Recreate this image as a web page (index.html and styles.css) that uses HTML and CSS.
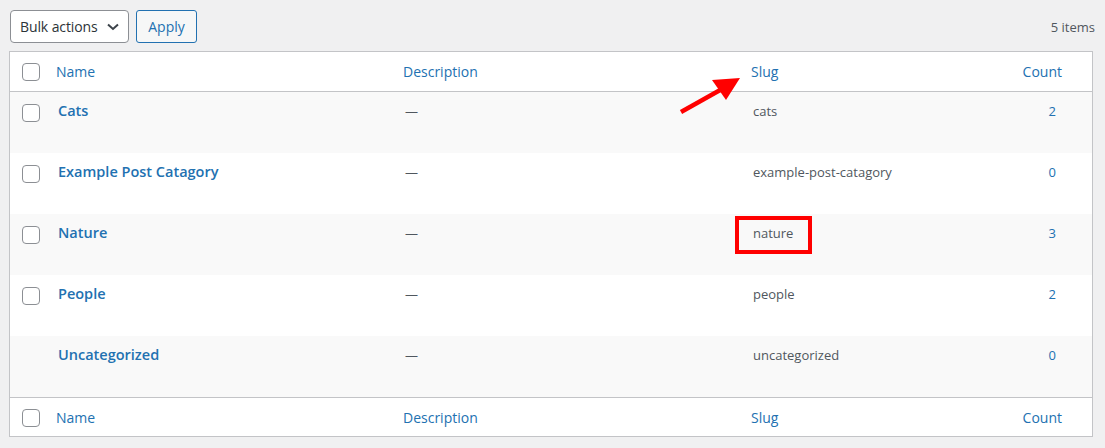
FILE: index.html
```html
<!DOCTYPE html>
<html lang="en">
<head>
<meta charset="utf-8">
<title>Categories</title>
<link rel="stylesheet" href="styles.css">
</head>
<body>
<div class="page">
  <div class="topbar">
    <div class="actions">
      <div class="select"><span class="sel-text">Bulk actions</span>
        <svg class="chev" width="12" height="8" viewBox="0 0 12 8"><path d="M1 1.5 L6 6 L11 1.5" fill="none" stroke="#3c434a" stroke-width="2"/></svg>
      </div>
      <button class="apply">Apply</button>
    </div>
    <div class="num">5 items</div>
  </div>

  <div class="list">
    <div class="grid head">
      <div class="c-check"><span class="cb"></span></div>
      <div class="c-name">Name</div>
      <div class="c-desc">Description</div>
      <div class="c-slug">Slug</div>
      <div class="c-count">Count</div>
    </div>

    <div class="grid row alt">
      <div class="c-check"><span class="cb"></span></div>
      <div class="c-name"><a class="title">Cats</a></div>
      <div class="c-desc">—</div>
      <div class="c-slug">cats</div>
      <div class="c-count">2</div>
    </div>
    <div class="grid row">
      <div class="c-check"><span class="cb"></span></div>
      <div class="c-name"><a class="title">Example Post Catagory</a></div>
      <div class="c-desc">—</div>
      <div class="c-slug">example-post-catagory</div>
      <div class="c-count">0</div>
    </div>
    <div class="grid row alt">
      <div class="c-check"><span class="cb"></span></div>
      <div class="c-name"><a class="title">Nature</a></div>
      <div class="c-desc">—</div>
      <div class="c-slug"><span class="hl">nature</span></div>
      <div class="c-count">3</div>
    </div>
    <div class="grid row">
      <div class="c-check"><span class="cb"></span></div>
      <div class="c-name"><a class="title">People</a></div>
      <div class="c-desc">—</div>
      <div class="c-slug">people</div>
      <div class="c-count">2</div>
    </div>
    <div class="grid row alt">
      <div class="c-check"></div>
      <div class="c-name"><a class="title">Uncategorized</a></div>
      <div class="c-desc">—</div>
      <div class="c-slug">uncategorized</div>
      <div class="c-count">0</div>
    </div>

    <div class="grid head foot">
      <div class="c-check"><span class="cb"></span></div>
      <div class="c-name">Name</div>
      <div class="c-desc">Description</div>
      <div class="c-slug">Slug</div>
      <div class="c-count">Count</div>
    </div>
  </div>

  <svg class="arrow" width="1105" height="448" viewBox="0 0 1105 448">
    <line x1="681" y1="112" x2="722" y2="89" stroke="#ff0000" stroke-width="4.5"/>
    <polygon points="712,80 740,78 726,100" fill="#ff0000"/>
  </svg>
</div>
</body>
</html>
```

FILE: styles.css
```css
*, *::before, *::after { box-sizing: border-box; }

html, body {
  margin: 0;
  padding: 0;
  background: #f0f0f1;
}

body {
  font-family: "Open Sans", "Noto Sans", "Liberation Sans", sans-serif;
  color: #3c434a;
  font-size: 13px;
}

.page {
  position: relative;
  width: 1105px;
  height: 448px;
  padding: 10px 12px 0 9px;
}

.topbar {
  display: flex;
  justify-content: space-between;
  align-items: center;
  height: 33px;
  margin-left: 1px;
  margin-right: -2px;
}

.actions {
  display: flex;
  gap: 7px;
  height: 33px;
}

.select {
  display: flex;
  align-items: center;
  width: 119px;
  height: 33px;
  padding: 0 9px 0 9px;
  background: #fff;
  border: 1px solid #8c8f94;
  border-radius: 4px;
  font-size: 14px;
  color: #2c3338;
  white-space: nowrap;
}

.sel-text { letter-spacing: -0.1px; }

.chev { margin-left: auto; }

.apply {
  width: 61px;
  height: 33px;
  font-family: inherit;
  font-size: 14px;
  color: #2271b1;
  background: #f6f7f7;
  border: 1px solid #2271b1;
  border-radius: 3px;
  padding: 0;
}

.num {
  font-size: 13px;
  color: #50575e;
}

.list {
  margin-top: 8px;
  width: 1084px;
  background: #fff;
  border: 1px solid #c3c4c7;
}

.grid {
  display: grid;
  grid-template-columns: 36px 347px 348px 220px 1fr;
}

.head {
  height: 40px;
  border-bottom: 1px solid #c3c4c7;
  align-items: center;
  font-size: 14px;
  color: #2271b1;
}

.head > div { padding-left: 10px; }

.foot {
  height: 39px;
  border-bottom: none;
  border-top: 1px solid #c3c4c7;
  padding-top: 1px;
}

.head .c-check { padding-left: 12px; display: flex; }
.head .c-count { text-align: right; padding-right: 30px; }

.row {
  height: 61px;
  padding-top: 9px;
  align-items: start;
  line-height: 20px;
  color: #50575e;
}

.row > div { padding-left: 12px; }
.row .c-check { padding-left: 12px; padding-top: 3px; display: flex; }
.row .c-count { text-align: right; padding-right: 36px; color: #2271b1; }

.alt { background: #f9f9f9; }

.cb {
  display: block;
  width: 18px;
  height: 18px;
  border: 1px solid #8c8f94;
  border-radius: 4px;
  background: #fff;
}

.title {
  font-size: 14.5px;
  font-weight: 600;
  color: #2271b1;
  text-decoration: none;
}

.hl { position: relative; }
.hl::after {
  content: "";
  position: absolute;
  left: -18px;
  top: -8px;
  width: 77px;
  height: 38px;
  border: 4px solid #ff0000;
}

.arrow {
  position: absolute;
  left: 0;
  top: 0;
  pointer-events: none;
}
```
